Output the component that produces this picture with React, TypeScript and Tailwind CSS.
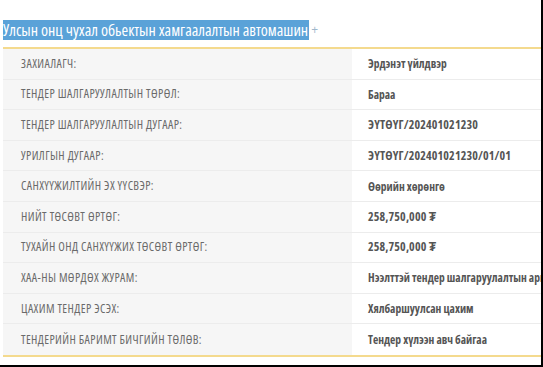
import React from "react";

const rows: [string, string, boolean][] = [
  ["ЗАХИАЛАГЧ:", "Эрдэнэт үйлдвэр", false],
  ["ТЕНДЕР ШАЛГАРУУЛАЛТЫН ТӨРӨЛ:", "Бараа", false],
  ["ТЕНДЕР ШАЛГАРУУЛАЛТЫН ДУГААР:", "ЭҮТӨҮГ/202401021230", true],
  ["УРИЛГЫН ДУГААР:", "ЭҮТӨҮГ/202401021230/01/01", true],
  ["САНХҮҮЖИЛТИЙН ЭХ ҮҮСВЭР:", "Өөрийн хөрөнгө", false],
  ["НИЙТ ТӨСӨВТ ӨРТӨГ:", "258,750,000 ₮", true],
  ["ТУХАЙН ОНД САНХҮҮЖИХ ТӨСӨВТ ӨРТӨГ:", "258,750,000 ₮", true],
  ["ХАА-НЫ МӨРДӨХ ЖУРАМ:", "Нээлттэй тендер шалгаруулалтын арга", false],
  ["ЦАХИМ ТЕНДЕР ЭСЭХ:", "Хялбаршуулсан цахим", false],
  ["ТЕНДЕРИЙН БАРИМТ БИЧГИЙН ТӨЛӨВ:", "Тендер хүлээн авч байгаа", false],
];

export default function App() {
  return (
    <div
      className="w-[543px] h-[367px] overflow-hidden bg-black"
      style={{ fontFamily: '"Open Sans", "Liberation Sans", sans-serif' }}
    >
      <div className="w-[541px] h-[365px] bg-white overflow-hidden pl-[3px] pt-[20px]">
        <div className="flex items-center h-[20px] whitespace-nowrap">
          <span className="bg-[#5aa2d8] text-white text-[16px] leading-[20px] pr-[1px] font-stretch-condensed">
            Улсын онц чухал обьектын хамгаалалтын автомашин
          </span>
          <span className="text-[#9fb8cc] text-[12px] ml-[2px]">+</span>
        </div>
        <div className="mt-[7px] w-[600px] border-t-2 border-b-2 border-[#f4da8e]">
          {rows.map(([k, v, code], i) => (
            <div
              key={i}
              className={`flex h-[30.6px] ${i < rows.length - 1 ? "border-b border-[#ececec]" : ""}`}
            >
              <div className="w-[349px] shrink-0 bg-[#f6f6f6] pl-[18px] flex items-center text-[12px] tracking-[0.4px] text-[#6a6a6a] whitespace-nowrap font-stretch-condensed">
                {k}
              </div>
              <div
                className={`flex-1 pl-[16px] flex items-center font-bold text-[#555555] whitespace-nowrap font-stretch-condensed ${
                  code ? "text-[12px] tracking-[0.15px]" : "text-[11.5px] tracking-[0px]"
                }`}
              >
                {v}
              </div>
            </div>
          ))}
        </div>
      </div>
    </div>
  );
}
